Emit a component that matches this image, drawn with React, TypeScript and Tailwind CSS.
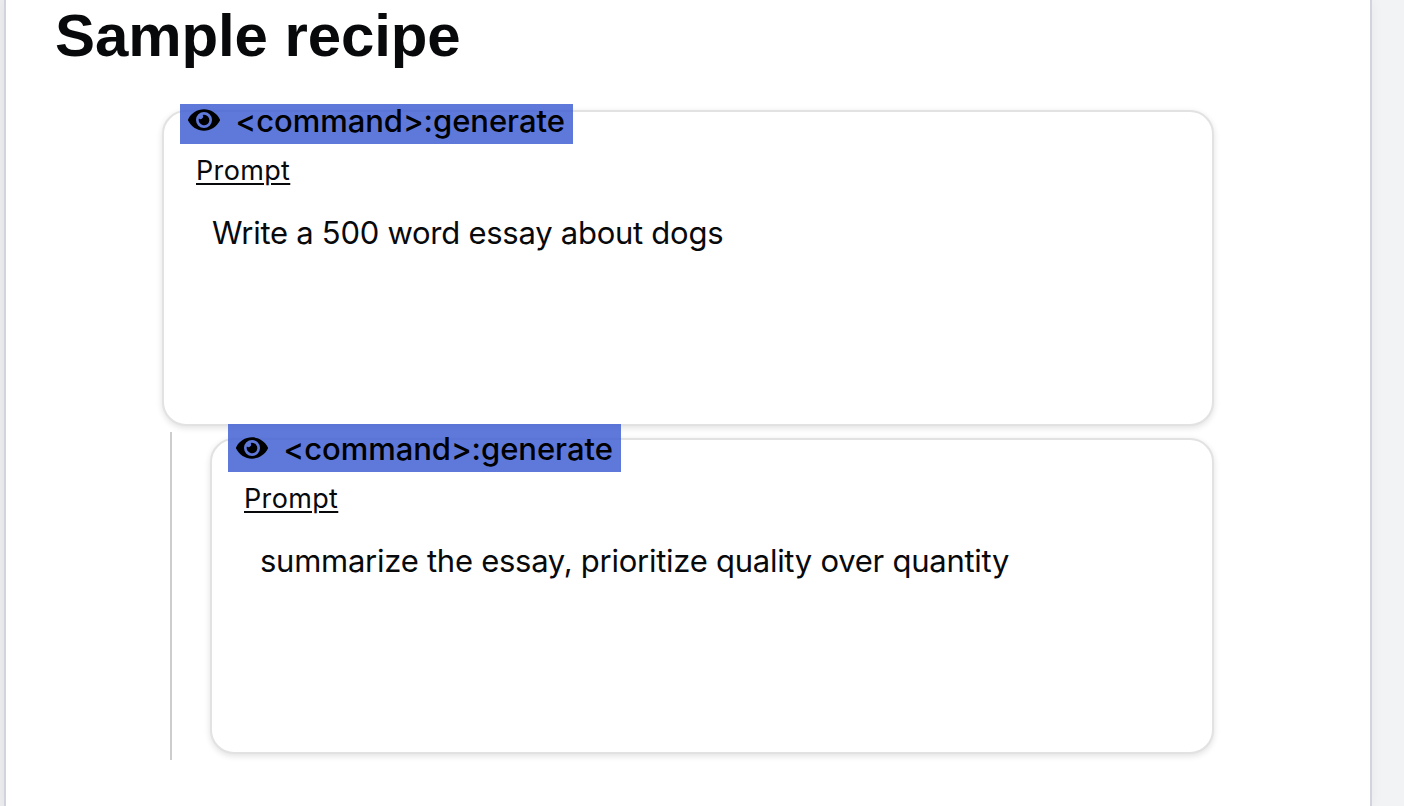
import { FaEye } from "react-icons/fa";

function CommandCard({ text, labelClass }: { text: string; labelClass: string }) {
  return (
    <section className="relative h-[316px] rounded-[24px] border-2 border-[#e2e2e2] bg-white pl-8 pt-[38px] shadow-[0_2px_6px_rgba(0,0,0,0.12)]">
      <div className={`absolute left-4 flex w-[393px] items-end bg-[#4563d5]/[0.86] pl-2 text-black ${labelClass}`}>
        <FaEye className="mb-[8px] h-8 w-8 shrink-0" />
        <span className="mb-px ml-[15.5px] whitespace-nowrap text-[31px] font-medium leading-[44px] tracking-[-0.04px]">
          {"<command>:generate"}
        </span>
      </div>
      <h2 className="text-[27px] leading-[42px] tracking-[0.35px] underline decoration-2 underline-offset-[3px]">Prompt</h2>
      <p className="ml-4 mt-[19px] whitespace-nowrap text-[31px] leading-[44px] tracking-[-0.26px]">{text}</p>
    </section>
  );
}

export default function App() {
  return (
    <div className="flex h-[806px] w-[1404px] overflow-hidden bg-[#f2f3f5] font-['Inter',sans-serif] text-[#08090b]">
      <div className="w-1 shrink-0 bg-[#ededf0]" />
      <main className="w-[1368px] shrink-0 border-x-2 border-[#d1d5db] bg-white shadow-[0_0_12px_rgba(0,0,0,0.05)]">
        <h1 className="h-[104px] pl-[49px] pt-[2px] font-['Liberation_Sans',Arial,sans-serif] text-[60px] font-bold leading-[68px] tracking-[-0.1px]">
          Sample recipe
        </h1>
        <div className="ml-[156px] w-[1052px] pt-[6px]">
          <CommandCard text="Write a 500 word essay about dogs" labelClass="-top-2 h-10" />
        </div>
        <div className="ml-[164px] mt-[6px] h-[328px] w-[1044px] border-l-2 border-[#cdcdcd] pl-[38px] pt-[6px]">
          <CommandCard text="summarize the essay, prioritize quality over quantity" labelClass="-top-4 h-12" />
        </div>
      </main>
    </div>
  );
}
